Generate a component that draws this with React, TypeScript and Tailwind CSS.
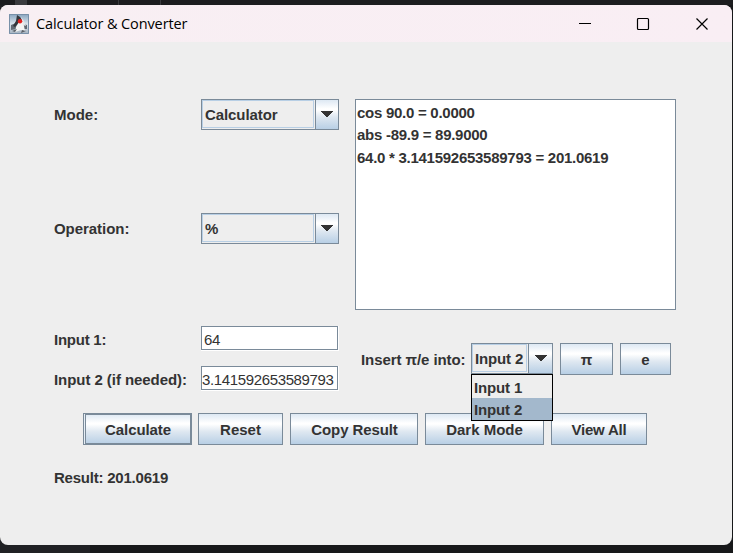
import type { ReactNode } from "react";

const steel = "border border-[#7a8a99]";
const metal =
  "bg-[linear-gradient(to_bottom,#dde8f3_0%,#ffffff_30%,#ffffff_34%,#dfe8f1_58%,#b8cfe5_100%)]";

function Arrow() {
  return (
    <svg width="12" height="7" viewBox="0 0 12 7" shapeRendering="crispEdges">
      <path d="M0 0H12V1H11V2H10V3H9V4H8V5H7V6H5V5H4V4H3V3H2V2H1V1H0Z" fill="#333333" />
    </svg>
  );
}

function Combo({ value, box, arrow }: { value: string; box: string; arrow: string }) {
  return (
    <div className={`flex h-[31px] shrink-0 ${steel} ${box}`}>
      <div className="mr-px mb-px flex min-w-0 flex-1 items-center border border-[#b8cfe5] pt-px pl-[2px]">{value}</div>
      <div className={`flex items-center justify-center border-l border-[#7a8a99] ${metal} ${arrow}`}>
        <Arrow />
      </div>
    </div>
  );
}

function Button({ children, className }: { children: ReactNode; className: string }) {
  return (
    <button className={`flex h-8 shrink-0 items-center justify-center whitespace-nowrap pt-px ${steel} ${metal} ${className}`}>
      {children}
    </button>
  );
}

function Field({ value, className }: { value: string; className: string }) {
  return (
    <div className="h-[25px] w-[138px] border-r border-b border-white">
      <div className={`flex h-6 items-center bg-white pt-[3px] font-normal ${steel} ${className}`}>{value}</div>
    </div>
  );
}

function Duke() {
  return (
    <svg width="20" height="20" viewBox="0 0 20 20">
      <defs>
        <linearGradient id="sky" x2="0" y2="1">
          <stop stopColor="#86a3be" />
          <stop offset=".5" stopColor="#dbe4ec" />
          <stop offset="1" stopColor="#a3b1bf" />
        </linearGradient>
      </defs>
      <path d="M0 0H20V20H0Z" fill="url(#sky)" />
      <path d="M.5 .5H19.5V19.5H.5Z" fill="none" stroke="#7890a8" />
      <path d="M2 11L7 9L8 15L2 16ZM14 10L18 11V15L13 15Z" fill="#626973" />
      <path d="M10 8L14 7L15 12L16 17L12 16L6 18L7 13Z" fill="#f4f4f3" />
      <path d="M8 1L11 3L14 7L13 8L10 8L8 11L6 13L4 12L7 7Z" fill="#33363b" />
      <path d="M12 3L15 7L17 12L14 11Z" fill="#e5e7e9" />
      <circle cx="11" cy="7.3" r="2.2" fill="#e3211f" />
      <path d="M3 17L8 15L6 18ZM13 16L17 17L12 19Z" fill="#5b6067" />
    </svg>
  );
}

export default function App() {
  return (
    <div className="h-[553px] w-[733px] overflow-hidden bg-[linear-gradient(to_right,#202124_90px,#17181a_90px)] font-['Liberation_Sans',Arial,sans-serif] text-[15px] leading-[22px] font-bold text-[#333333]">
      <div className="flex h-[5px] bg-[#1c1d1f]">
        <div className="ml-[15px] w-[12px] bg-[#3a3b3e]" />
        <div className="ml-[91px] w-px bg-[#3a3b3e]" />
        <div className="ml-[41px] w-px bg-[#3a3b3e]" />
      </div>
      <div className="h-[540px] w-[732px] overflow-hidden rounded-[8px] bg-[#eeeeee]">
        <header className="flex h-[37px] items-center bg-linear-to-r from-[#f8eff3] to-[#f9eef4] pl-[9px] font-['Open_Sans','Noto_Sans',sans-serif] text-[14.5px] font-normal text-black">
          <Duke />
          <span className="ml-[7px] w-[180px] tracking-[-0.1px] whitespace-nowrap">Calculator &amp; Converter</span>
          <svg className="ml-auto" width="133" height="16" viewBox="0 0 133 16" fill="none" stroke="#000" strokeWidth="1.2">
            <path d="M0 7.5H12" shapeRendering="crispEdges" />
            <rect x="58.5" y="2.5" width="11" height="11" rx="1" />
            <path d="M117.5 2.5L128.5 13.5M128.5 2.5L117.5 13.5" />
          </svg>
          <div className="w-[20px]" />
        </header>

        <main className="pt-[57px]">
          <div className="flex h-[314px] pl-[54px]">
            <section className="w-[285px] shrink-0">
              <div className="mb-[83px] flex h-[31px] items-center">
                <span className="w-[147px]">Mode:</span>
                <Combo value="Calculator" box="w-[138px] tracking-[-0.08px]" arrow="w-[23px]" />
              </div>
              <div className="mb-[82px] flex h-[31px] items-center">
                <span className="w-[147px] tracking-[-0.05px]">Operation:</span>
                <Combo value="%" box="w-[138px]" arrow="w-[23px]" />
              </div>
              <div className="mb-[15px] flex h-[25px] items-center">
                <span className="w-[147px] pt-[3px] tracking-[-0.25px]">Input 1:</span>
                <Field value="64" className="pl-[2px] tracking-[-0.34px]" />
              </div>
              <div className="flex h-[25px] items-center">
                <span className="w-[147px] pt-[3px] tracking-[-0.06px] whitespace-nowrap">Input 2 (if needed):</span>
                <Field value="3.141592653589793" className="tracking-[-0.36px]" />
              </div>
            </section>

            <section className="ml-[16px] w-[322px]">
              <div className={`h-[211px] w-[321px] bg-white pt-[2px] pl-px tracking-[-0.27px] ${steel}`}>
                <p>cos 90.0 = 0.0000</p>
                <p>abs -89.9 = 89.9000</p>
                <p className="pt-px">64.0 * 3.141592653589793 = 201.0619</p>
              </div>
              <div className="mt-[33px] flex h-8 items-start pl-[6px]">
                <span className="mt-[6px] w-[110px] shrink-0 tracking-[-0.07px] whitespace-nowrap">Insert π/e into:</span>
                <div className="relative mr-[7px] tracking-[-0.15px]">
                  <Combo value="Input 2" box="w-[82px] whitespace-nowrap" arrow="w-[24px]" />
                  <div className="absolute top-[31px] left-0 z-10 h-[47px] w-[82px] border border-black bg-[#eeeeee] pt-px">
                    <p className="h-[22px] pt-px pl-[2px]">Input 1</p>
                    <p className="h-[22px] bg-[#a3b8cc] pt-px pl-[2px]">Input 2</p>
                  </div>
                </div>
                <Button className="mr-[7px] w-[53px]">π</Button>
                <Button className="w-[51px]">e</Button>
              </div>
            </section>
          </div>

          <div className="flex gap-[7px] pl-[83px]">
            <Button className="-mr-px w-[109px] pl-px tracking-[-0.1px] shadow-[inset_1px_0_0_#e6eef6,inset_2px_0_0_#7a8a99,inset_0_0_0_1px_#7a8a99]">Calculate</Button>
            <Button className="w-[85px]">Reset</Button>
            <Button className="w-[128px] pl-px tracking-[-0.1px]">Copy Result</Button>
            <Button className="w-[119px]">Dark Mode</Button>
            <Button className="w-[96px] tracking-[-0.2px]">View All</Button>
          </div>
          <p className="mt-[22px] pl-[54px] tracking-[-0.22px]">Result: 201.0619</p>
        </main>
      </div>
    </div>
  );
}
